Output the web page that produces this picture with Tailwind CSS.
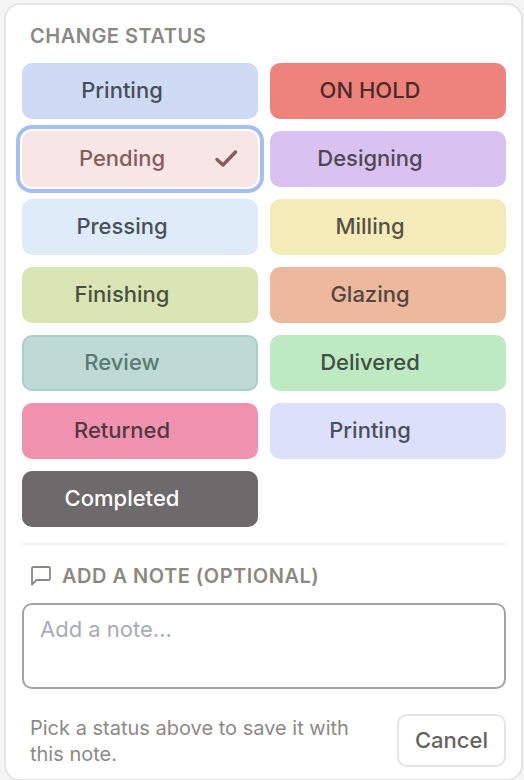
<!DOCTYPE html>
<html lang="en">
<head>
    <meta charset="UTF-8">
    <title>Change status</title>
    <script src="https://cdn.jsdelivr.net/npm/@tailwindcss/browser@4"></script>
</head>
<body class="bg-[#f5f5f5] h-[780px] overflow-hidden font-['Inter',sans-serif]">
    <div class="mt-[3px] ml-[4px] mr-[1px] h-[778px] bg-white border-2 border-[#e5e5e5] rounded-[16px] pl-4 pr-[15px] pt-[17px]">
        <h2 class="ml-2 text-[20px] leading-[28px] font-semibold tracking-[0.5px] text-[#8c8984]">CHANGE STATUS</h2>
        <div class="grid grid-cols-2 gap-3 mt-[13px]">
            <button class="h-14 px-5 pb-[2px] flex items-center gap-3 rounded-[10px] bg-[#cfdbf5] text-[#4a4d55] text-[22px] font-[450]"><span class="flex-1 text-center">Printing</span><span class="w-6"></span></button>
            <button class="h-14 px-5 pb-[2px] flex items-center gap-3 rounded-[10px] bg-[#ee837d] text-[#4a2b2a] text-[22px] font-[450]"><span class="flex-1 text-center">ON HOLD</span><span class="w-6"></span></button>
            <button class="h-14 px-5 pb-[2px] flex items-center gap-3 rounded-[10px] bg-[#f7e6e5] text-[#855d5c] text-[22px] font-[450] outline-4 outline-offset-[2px] outline-[#a4bff4]">
                <span class="flex-1 text-center">Pending</span>
                <svg class="w-6 h-6" viewBox="0 0 24 24" fill="none" stroke="currentColor" stroke-width="3.500" stroke-linecap="round" stroke-linejoin="round"><path d="M3 13.500l6 5.500L21.500 6"/></svg>
            </button>
            <button class="h-14 px-5 pb-[2px] flex items-center gap-3 rounded-[10px] bg-[#dac2f0] text-[#4f4852] text-[22px] font-[450]"><span class="flex-1 text-center">Designing</span><span class="w-6"></span></button>
            <button class="h-14 px-5 pb-[2px] flex items-center gap-3 rounded-[10px] bg-[#deecf9] text-[#4a5057] text-[22px] font-[450]"><span class="flex-1 text-center">Pressing</span><span class="w-6"></span></button>
            <button class="h-14 px-5 pb-[2px] flex items-center gap-3 rounded-[10px] bg-[#f5ebb8] text-[#54514a] text-[22px] font-[450]"><span class="flex-1 text-center">Milling</span><span class="w-6"></span></button>
            <button class="h-14 px-5 pb-[2px] flex items-center gap-3 rounded-[10px] bg-[#d9e5b5] text-[#4a5040] text-[22px] font-[450]"><span class="flex-1 text-center">Finishing</span><span class="w-6"></span></button>
            <button class="h-14 px-5 pb-[2px] flex items-center gap-3 rounded-[10px] bg-[#ecb89e] text-[#55463f] text-[22px] font-[450]"><span class="flex-1 text-center">Glazing</span><span class="w-6"></span></button>
            <button class="h-14 px-[18px] pb-[2px] flex items-center gap-3 rounded-[10px] bg-[#bddbd4] border-2 border-[#a8d0c6] text-[#5a7a72] text-[22px] font-[450]"><span class="flex-1 text-center">Review</span><span class="w-6"></span></button>
            <button class="h-14 px-5 pb-[2px] flex items-center gap-3 rounded-[10px] bg-[#bdeac1] text-[#424f44] text-[22px] font-[450]"><span class="flex-1 text-center">Delivered</span><span class="w-6"></span></button>
            <button class="h-14 px-5 pb-[2px] flex items-center gap-3 rounded-[10px] bg-[#f191b0] text-[#4f3a42] text-[22px] font-[450]"><span class="flex-1 text-center">Returned</span><span class="w-6"></span></button>
            <button class="h-14 px-5 pb-[2px] flex items-center gap-3 rounded-[10px] bg-[#dce0f8] text-[#4c4e5a] text-[22px] font-[450]"><span class="flex-1 text-center">Printing</span><span class="w-6"></span></button>
            <button class="h-14 px-5 pb-[2px] flex items-center gap-3 rounded-[10px] bg-[#6c6a6b] text-white text-[22px] font-[450]"><span class="flex-1 text-center">Completed</span><span class="w-6"></span></button>
        </div>
        <div class="mt-4 border-t-2 border-[#f2f2f2] pt-[17px]">
            <div class="ml-2 flex items-center gap-[10px] h-[28px]">
                <svg class="w-[22px] h-[22px] text-[#8c8984]" viewBox="0 0 22 22" fill="none" stroke="currentColor" stroke-width="1.800" stroke-linejoin="round"><path d="M2 3.500q0-1.500 1.500-1.500h15q1.500 0 1.500 1.500v10q0 1.500-1.500 1.500H6.500L2 19.500z"/></svg>
                <span class="text-[20px] font-semibold tracking-[0.5px] text-[#8c8984]">ADD A NOTE (OPTIONAL)</span>
            </div>
            <div class="mt-[13px] h-[86px] border-2 border-[#a3a3a3] rounded-[10px] px-4 py-[9px] text-[22px] leading-[30px] text-[#a6acba]">Add a note...</div>
            <div class="mt-[25px] flex items-center justify-between gap-4 pl-2">
                <p class="text-[20px] leading-[26px] text-[#8c8984] w-[340px]">Pick a status above to save it with this note.</p>
                <button class="w-[109px] h-[53px] border-2 border-[#e5e5e5] rounded-[10px] text-[22px] font-[450] text-[#66635f]">Cancel</button>
            </div>
        </div>
    </div>
</body>
</html>
